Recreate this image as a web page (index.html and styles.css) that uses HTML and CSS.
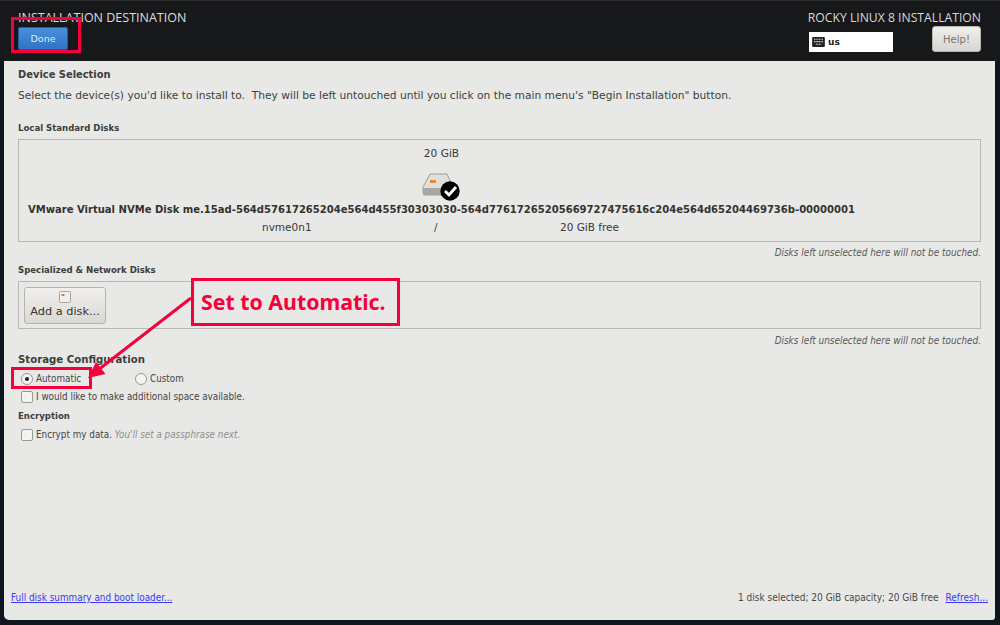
FILE: index.html
```html
<!DOCTYPE html>
<html lang="en">
<head>
<meta charset="utf-8">
<title>Installation Destination</title>
<link rel="stylesheet" href="styles.css">
</head>
<body>
<div class="screen">
  <header class="topbar">
    <div class="top-left">
      <div class="spoke-title">INSTALLATION DESTINATION</div>
      <button class="done">Done</button>
    </div>
    <div class="top-right">
      <div class="distro">ROCKY LINUX 8 INSTALLATION</div>
      <div class="top-controls">
        <div class="layout">
          <svg class="kbd" width="13" height="10" viewBox="0 0 14 11"><rect width="14" height="11" rx="1" fill="#222"/><path d="M2 2.500h10M2 5h10M4 8h6" stroke="#ddd" stroke-width="1.300" stroke-dasharray="1.200 .6"/></svg>
          <span>us</span>
        </div>
        <button class="help">Help!</button>
      </div>
    </div>
  </header>
  <main class="panel">
    <h2 class="h-device">Device Selection</h2>
    <p class="intro">Select the device(s) you'd like to install to.&nbsp; They will be left untouched until you click on the main menu's "Begin Installation" button.</p>
    <h3 class="h-local">Local Standard Disks</h3>
    <section class="disk-box">
      <div class="disk-item">
        <div class="disk-size">20 GiB</div>
        <svg class="disk-icon" width="38" height="30" viewBox="0 0 38 30">
          <path d="M8 3h17l6 13v6a2 2 0 0 1-2 2H3a2 2 0 0 1-2-2v-6z" fill="#e2dfd9" stroke="#8c8a86" stroke-width=".8"/>
          <path d="M1 17h30v5a2 2 0 0 1-2 2H3a2 2 0 0 1-2-2z" fill="#a9a7a3"/>
          <rect x="8" y="9" width="6" height="3" fill="#e08a3a"/>
          <circle cx="28" cy="20" r="9.700" fill="#000"/>
          <path d="M23 20l4 4 7-8" fill="none" stroke="#fff" stroke-width="2.800"/>
        </svg>
        <div class="disk-name">VMware Virtual NVMe Disk me.15ad-564d57617265204e564d455f30303030-564d77617265205669727475616c204e564d65204469736b-00000001</div>
        <div class="disk-meta"><span>nvme0n1</span><span>/</span><span>20 GiB free</span></div>
      </div>
    </section>
    <p class="note">Disks left unselected here will not be touched.</p>
    <h3 class="h-spec">Specialized &amp; Network Disks</h3>
    <section class="add-box">
      <button class="add-disk">
        <svg width="12" height="12" viewBox="0 0 12 12"><rect x=".5" y=".5" width="11" height="11" rx="1" fill="#f2f0ec" stroke="#a8a6a2"/><rect x="2.500" y="3" width="3" height="2" fill="#d9803a"/></svg>
        <span>Add a disk...</span>
      </button>
    </section>
    <p class="note">Disks left unselected here will not be touched.</p>
    <h2 class="h-storage">Storage Configuration</h2>
    <div class="radios">
      <label class="opt opt-auto"><span class="radio on"></span>Automatic</label>
      <label class="opt"><span class="radio"></span>Custom</label>
    </div>
    <label class="opt check-row"><span class="check"></span>I would like to make additional space available.</label>
    <h3 class="h-enc">Encryption</h3>
    <label class="opt check-row"><span class="check"></span>Encrypt my data.&nbsp;<em>You'll set a passphrase next.</em></label>
    <footer class="foot">
      <a class="link" href="#">Full disk summary and boot loader...</a>
      <div class="foot-right"><span>1 disk selected; 20 GiB capacity; 20 GiB free</span><a class="link" href="#">Refresh...</a></div>
    </footer>
  </main>
  <div class="mark mark-done"></div>
  <div class="mark mark-auto"></div>
  <div class="callout">Set to Automatic.</div>
  <svg class="arrow" width="120" height="95" viewBox="0 0 120 95"><path d="M111 8L18 80" stroke="#f5003c" stroke-width="3"/><path d="M8 88L16 72 25.500 84z" fill="#f5003c"/></svg>
</div>
</body>
</html>
```

FILE: styles.css
```css
* { box-sizing: border-box; }
html, body { margin: 0; padding: 0; }
body { width: 1000px; height: 625px; overflow: hidden; background: #0f1620; font-family: "DejaVu Sans", sans-serif; color: #3a3a38; }
button { font-family: inherit; cursor: default; }
h2, h3, p { margin: 0; }

.screen { position: relative; width: 1000px; height: 625px; display: flex; flex-direction: column; padding: 0 5px 5px 4px; }

.topbar { height: 61px; margin-left: -4px; margin-right: -5px; padding: 10px 19px 0 18px; background: #17181a; display: flex; justify-content: space-between; flex: none; border-top: 1px solid #2a2a2c; }
.top-left { display: flex; flex-direction: column; }
.spoke-title { font-family: "Open Sans", sans-serif; font-size: 12.500px; line-height: 14px; color: #dcdcdc; white-space: nowrap; }
.done { width: 50px; height: 23px; margin-top: 2px; border: 1px solid #1d5fa8; border-radius: 2px; background: linear-gradient(#4a8fdc, #2f73c4); color: #dce9f7; font-size: 9.500px; padding: 0; }

.top-right { display: flex; flex-direction: column; align-items: flex-end; }
.distro { font-family: "Open Sans", sans-serif; font-size: 12.200px; line-height: 14px; color: #d8d8d8; white-space: nowrap; }
.top-controls { width: 172px; display: flex; justify-content: space-between; align-items: flex-start; margin-top: 1px; }
.layout { width: 84px; height: 20px; margin-top: 6px; background: #fff; display: flex; align-items: center; gap: 3px; padding-left: 3px; font-size: 9px; font-weight: 700; color: #222; }
.help { width: 49px; height: 26px; border: 1px solid #b8b6b2; border-radius: 3px; background: linear-gradient(#efeeec, #d8d6d2); color: #77756f; font-size: 10px; padding: 0; }

.panel { flex: 1; position: relative; background: #e8e8e7; border-radius: 0 0 3px 5px; padding: 0 14px; display: flex; flex-direction: column; font-size: 10.500px; }

h2, h3 { font-family: "DejaVu Sans Condensed", "DejaVu Sans", sans-serif; font-weight: 700; color: #3d3d3b; }
.h-device { font-size: 11px; line-height: 14px; margin-top: 7px; }
.intro { font-size: 10.660px; line-height: 14px; margin-top: 7px; color: #403f3d; white-space: nowrap; }
.h-local { font-size: 9.500px; line-height: 12px; margin-top: 19px; }

.disk-box { height: 103px; margin-top: 5px; border: 1px solid #b9b8b5; padding: 6px 0 0 9px; display: flex; align-items: flex-start; }
.disk-item { display: flex; flex-direction: column; align-items: center; }
.disk-size { font-size: 10.600px; line-height: 14px; }
.disk-icon { margin-top: 11px; display: block; }
.disk-name { font-family: "DejaVu Sans Condensed", "DejaVu Sans", sans-serif; font-size: 11.150px; font-weight: 700; line-height: 14px; white-space: nowrap; margin-top: 2px; color: #33332f; }
.disk-meta { align-self: stretch; margin-top: 3px; padding-left: 234px; font-size: 10.500px; line-height: 14px; display: grid; grid-template-columns: 172px 126px auto; }

.note { font-family: "DejaVu Sans Condensed", "DejaVu Sans", sans-serif; font-size: 9.900px; font-style: italic; line-height: 12px; text-align: right; margin-top: 5px; color: #5a5a58; }
.add-box + .note { margin-top: 6px; }
.h-spec { font-size: 9.500px; line-height: 12px; margin-top: 5px; }

.add-box { height: 48px; margin-top: 5px; border: 1px solid #b9b8b5; padding: 5px; }
.add-disk { width: 82px; height: 37px; border: 1px solid #b5b3af; border-radius: 3px; background: linear-gradient(#f0efed, #dbd9d5); display: flex; flex-direction: column; align-items: center; padding: 3px 0 0; font-size: 11.300px; color: #333; gap: 2px; }
.add-disk span { line-height: 13px; }

.h-storage { font-size: 11.300px; line-height: 14px; margin-top: 6px; }
.radios { display: flex; height: 14px; margin-top: 5px; }
.opt { display: flex; align-items: center; font-family: "DejaVu Sans Condensed", "DejaVu Sans", sans-serif; font-size: 9.800px; line-height: 14px; color: #464644; white-space: nowrap; padding-left: 3px; }
.opt-auto { width: 114px; }
.radio { width: 12px; height: 12px; border-radius: 50%; border: 1px solid #9a9995; background: #f4f3f1; margin-right: 3px; position: relative; display: block; }
.radio.on::after { content: ""; position: absolute; left: 3px; top: 3px; width: 4px; height: 4px; border-radius: 50%; background: #222; }
.check-row { height: 14px; margin-top: 4px; }
.check { width: 12px; height: 12px; border-radius: 2px; border: 1px solid #9a9995; background: #f4f3f1; margin-right: 3px; display: block; }
.h-enc { font-size: 9.500px; line-height: 12px; margin-top: 6px; }
.h-enc + .check-row { margin-top: 6px; }
em { color: #8f8f8b; }

.foot { margin-top: auto; margin-bottom: 16px; margin-left: -7px; margin-right: -7px; display: flex; justify-content: space-between; font-family: "DejaVu Sans Condensed", "DejaVu Sans", sans-serif; font-size: 9.900px; line-height: 12px; color: #4a4a48; }
.foot-right { display: flex; gap: 7px; font-size: 10px; }
.link { color: #3a3af0; text-decoration: underline; }

.mark { position: absolute; border: 3px solid #f5003c; }
.mark-done { left: 11px; top: 17px; width: 70px; height: 36px; }
.mark-auto { left: 11px; top: 367px; width: 81px; height: 22px; }
.callout { position: absolute; left: 191px; top: 278px; width: 209px; height: 48px; border: 3px solid #f5003c; background: #e8e8e7; color: #f5003c; font-family: "Noto Sans", sans-serif; font-size: 21.300px; font-weight: 700; line-height: 42px; padding-left: 7px; white-space: nowrap; }
.arrow { position: absolute; left: 80px; top: 290px; }
```
